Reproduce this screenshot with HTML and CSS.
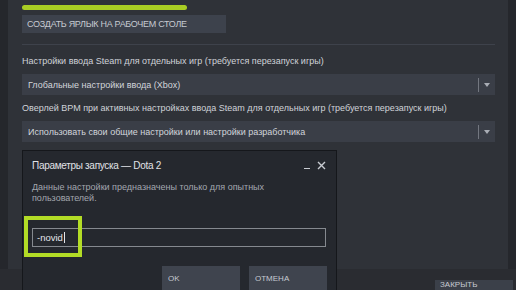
FILE: index.html
```html
<!DOCTYPE html>
<html lang="ru">
<head>
<meta charset="UTF-8">
<title>Параметры запуска — Dota 2</title>
<link rel="stylesheet" href="styles.css">
</head>
<body>

<div class="screen">
    <div class="panel">
        <div class="progress"></div>
        <button class="btn btn-wide">Создать ярлык на рабочем столе</button>
        <hr class="divider">

        <div class="field-label">Настройки ввода Steam для отдельных игр (требуется перезапуск игры)</div>
        <div class="dropdown">
            <span>Глобальные настройки ввода (Xbox)</span>
            <span class="dropdown-arrow"></span>
        </div>

        <div class="field-label">Оверлей BPM при активных настройках ввода Steam для отдельных игр (требуется перезапуск игры)</div>
        <div class="dropdown">
            <span>Использовать свои общие настройки или настройки разработчика</span>
            <span class="dropdown-arrow"></span>
        </div>
    </div>
    <div class="footer">
        <button class="btn btn-close">Закрыть</button>
    </div>

    <div class="dialog">
        <div class="dialog-head">
            <span class="dialog-title">Параметры запуска — Dota 2</span>
            <span class="dialog-min"></span>
            <svg class="dialog-x" width="9" height="9" viewBox="0 0 9 9">
                <path d="M1 1 L8 8 M8 1 L1 8" stroke="#c8ccd2" stroke-width="1.4"/>
            </svg>
        </div>
        <p class="dialog-text">Данные настройки предназначены только для опытных пользователей.</p>
        <div class="launch-input">-novid<span class="caret"></span></div>
        <div class="dialog-buttons">
            <button class="btn btn-dialog">OK</button>
            <button class="btn btn-dialog">Отмена</button>
        </div>
        <div class="mark"></div>
    </div>
</div>

</body>
</html>
```

FILE: styles.css
```css
body {
    margin: 0;
    background: #25272c;
    font-family: "Liberation Sans", Arial, sans-serif;
    overflow: hidden;
}
.screen {
    width: 516px;
    height: 290px;
    position: relative;
    display: flex;
    flex-direction: column;
    overflow: hidden;
}
.panel {
    flex-shrink: 0;
    margin-left: 8px;
    width: 500px;
    height: 269px;
    box-sizing: border-box;
    padding: 5px 13px 0 14px;
    background: #2f3238;
}
.progress {
    width: 165px;
    height: 5px;
    border-radius: 3px;
    background: #a9cd24;
}
.btn {
    font-family: inherit;
    border: none;
    background: #3d424c;
    color: #c6cad1;
    text-transform: uppercase;
    text-align: left;
    cursor: pointer;
}
.btn-wide {
    display: block;
    margin-top: 5px;
    width: 204px;
    height: 18px;
    padding: 0 0 0 5px;
    font-size: 9px;
    letter-spacing: -0.3px;
}
.divider {
    margin: 11px 0 0;
    border: none;
    height: 1px;
    background: #3e424b;
}
.field-label {
    margin-top: 9px;
    height: 14px;
    font-size: 9px;
    line-height: 14px;
    color: #d0d3d9;
}
.dropdown + .field-label {
    margin-top: 6px;
}
.dropdown {
    margin-top: 6px;
    height: 21px;
    display: flex;
    align-items: center;
    justify-content: space-between;
    padding-left: 6px;
    background: #3a3e47;
    color: #d2d5db;
    font-size: 9px;
}
.dropdown-arrow {
    width: 16px;
    height: 14px;
    border-left: 1px solid #737780;
    position: relative;
}
.dropdown-arrow::after {
    content: "";
    position: absolute;
    left: 5px;
    top: 5px;
    border-left: 3px solid transparent;
    border-right: 3px solid transparent;
    border-top: 4px solid #a9adb5;
}
.footer {
    flex: 1;
    min-height: 0;
    background: #2a2c31;
    display: flex;
    justify-content: flex-end;
    padding: 11px 3px 0 0;
}
.btn-close {
    flex-shrink: 0;
    width: 78px;
    height: 20px;
    padding: 1px 0 0 5px;
    font-size: 8px;
    line-height: 8px;
    box-sizing: border-box;
    background: #3b4049;
    display: flex;
    align-items: flex-start;
}
.dialog {
    position: absolute;
    left: 22px;
    top: 150px;
    width: 315px;
    height: 150px;
    box-sizing: border-box;
    background: #25282e;
    border: 1px solid #15171b;
    padding: 0 10px 0 9px;
}
.dialog-head {
    display: flex;
    align-items: center;
    height: 24px;
    padding-top: 2px;
}
.dialog-title {
    flex: 1;
    font-size: 10px;
    letter-spacing: -0.3px;
    color: #e0e2e6;
}
.dialog-min {
    width: 6px;
    height: 1px;
    background: #c8ccd2;
    margin: 6px 7px 0 0;
}
.dialog-text {
    margin: 5px 0 0;
    width: 265px;
    font-size: 9px;
    line-height: 11px;
    color: #a3a7ae;
}
.launch-input {
    margin-top: 24px;
    height: 19px;
    box-sizing: border-box;
    border: 1px solid #85898f;
    padding: 3px 0 0 4px;
    font-size: 9.5px;
    color: #e4e6ea;
    display: flex;
}
.caret {
    width: 1px;
    height: 11px;
    background: #e4e6ea;
    margin-left: 1px;
}
.dialog-buttons {
    margin-top: 19px;
    display: flex;
    justify-content: flex-end;
    gap: 9px;
    margin-right: -1px;
}
.btn-dialog {
    width: 78px;
    height: 24px;
    padding: 0 0 0 6px;
    font-size: 8px;
    background: #3f444e;
}
.mark {
    position: absolute;
    left: 1px;
    top: 65px;
    width: 58px;
    height: 41px;
    box-sizing: border-box;
    border: 4px solid #b3dc26;
}
```
